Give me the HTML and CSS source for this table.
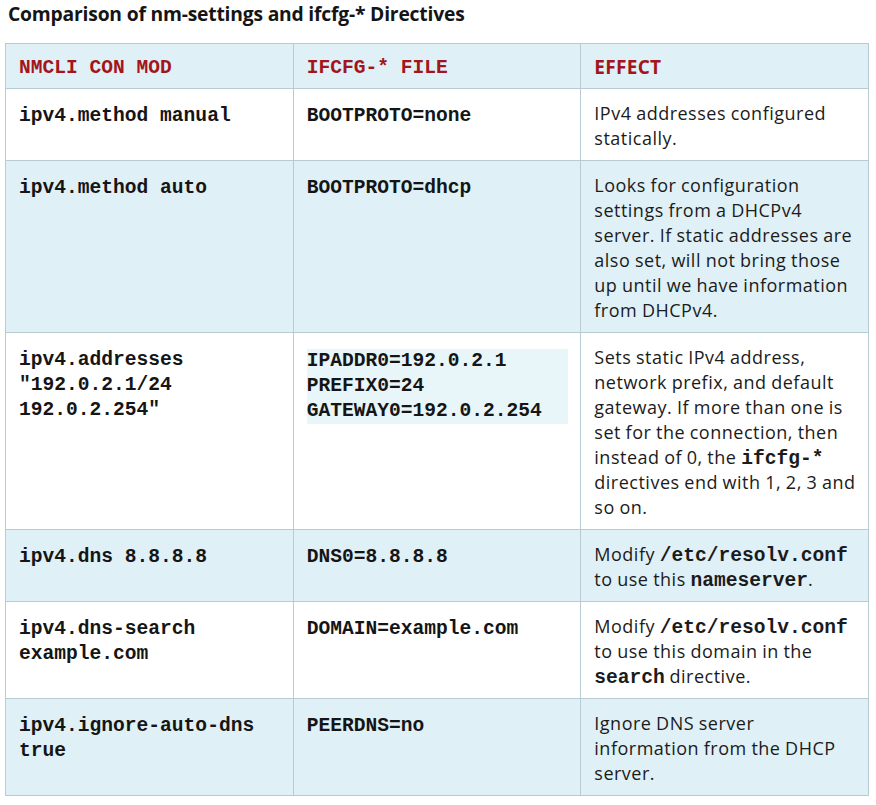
FILE: index.html
```html
<!DOCTYPE html>
<html lang="en">
<head>
<meta charset="utf-8">
<title>Comparison of nm-settings and ifcfg-* Directives</title>
<link rel="stylesheet" href="styles.css">
</head>
<body>
<h1 class="title">Comparison of nm-settings and ifcfg-* Directives</h1>
<table class="cmp">
  <thead>
    <tr class="row-alt">
      <th class="code">NMCLI CON MOD</th>
      <th class="code">IFCFG-* FILE</th>
      <th class="head-effect">EFFECT</th>
    </tr>
  </thead>
  <tbody>
    <tr>
      <td class="code">ipv4.method manual</td>
      <td class="code">BOOTPROTO=none</td>
      <td class="effect">IPv4 addresses configured statically.</td>
    </tr>
    <tr class="row-alt">
      <td class="code">ipv4.method auto</td>
      <td class="code">BOOTPROTO=dhcp</td>
      <td class="effect">Looks for configuration settings from a DHCPv4 server. If static addresses are also set, will not bring those up until we have information from DHCPv4.</td>
    </tr>
    <tr>
      <td class="code">ipv4.addresses<br>"192.0.2.1/24<br>192.0.2.254"</td>
      <td class="code"><pre class="block">IPADDR0=192.0.2.1
PREFIX0=24
GATEWAY0=192.0.2.254</pre></td>
      <td class="effect">Sets static IPv4 address, network prefix, and default gateway. If more than one is set for the connection, then instead of 0, the <code>ifcfg-*</code> directives end with 1, 2, 3 and so on.</td>
    </tr>
    <tr class="row-alt">
      <td class="code">ipv4.dns 8.8.8.8</td>
      <td class="code">DNS0=8.8.8.8</td>
      <td class="effect">Modify <code>/etc/resolv.conf</code> to use this <code>nameserver</code>.</td>
    </tr>
    <tr>
      <td class="code">ipv4.dns-search example.com</td>
      <td class="code">DOMAIN=example.com</td>
      <td class="effect">Modify <code>/etc/resolv.conf</code> to use this domain in the <code>search</code> directive.</td>
    </tr>
    <tr class="row-alt">
      <td class="code">ipv4.ignore-auto-dns true</td>
      <td class="code">PEERDNS=no</td>
      <td class="effect">Ignore DNS server information from the DHCP server.</td>
    </tr>
  </tbody>
</table>
</body>
</html>
```
FILE: styles.css
```css
html, body {
  margin: 0;
  padding: 0;
  background: #ffffff;
}
body {
  padding: 0 8px 0 5px;
  font-family: "Open Sans", "Noto Sans", sans-serif;
  color: #151515;
}
.title {
  margin: 0;
  padding: 1px 0 0 3px;
  height: 43px;
  box-sizing: border-box;
  font-family: "Open Sans", sans-serif;
  font-weight: 700;
  font-size: 19.3px;
  line-height: 25px;
  color: #151515;
  letter-spacing: -0.2px;
}
.cmp {
  width: 864px;
  table-layout: fixed;
  border-collapse: collapse;
  border: 1px solid #b9cbd2;
}
.cmp th, .cmp td {
  border: 1px solid #b9cbd2;
  padding: 15px 12px 8px 13px;
  vertical-align: top;
  text-align: left;
  line-height: 25px;
}
.cmp th {
  padding-top: 12px;
  padding-bottom: 7px;
  color: #a3151b;
  font-weight: 700;
}
.row-alt {
  background: #dff0f7;
}
.code {
  font-family: "Liberation Mono", monospace;
  font-weight: 700;
  font-size: 19.6px;
}
.cmp .head-effect {
  font-family: "Open Sans", sans-serif;
  font-size: 19px;
  letter-spacing: 0.3px;
  padding-top: 11px;
  padding-bottom: 8px;
}
.cmp .effect {
  font-family: "Open Sans", sans-serif;
  font-size: 18px;
  letter-spacing: 0.5px;
  word-spacing: -0.5px;
  color: #1b1b1b;
  padding-top: 12px;
  padding-bottom: 9px;
}
.effect code {
  font-family: "Liberation Mono", monospace;
  font-weight: 700;
  font-size: 19.6px;
  letter-spacing: 0;
  word-spacing: 0;
  line-height: 16px;
}
.block {
  margin: 1px 0 0 0;
  background: #e8f5f9;
  font-family: "Liberation Mono", monospace;
  font-weight: 700;
  font-size: 19.6px;
  line-height: 25px;
}
```
